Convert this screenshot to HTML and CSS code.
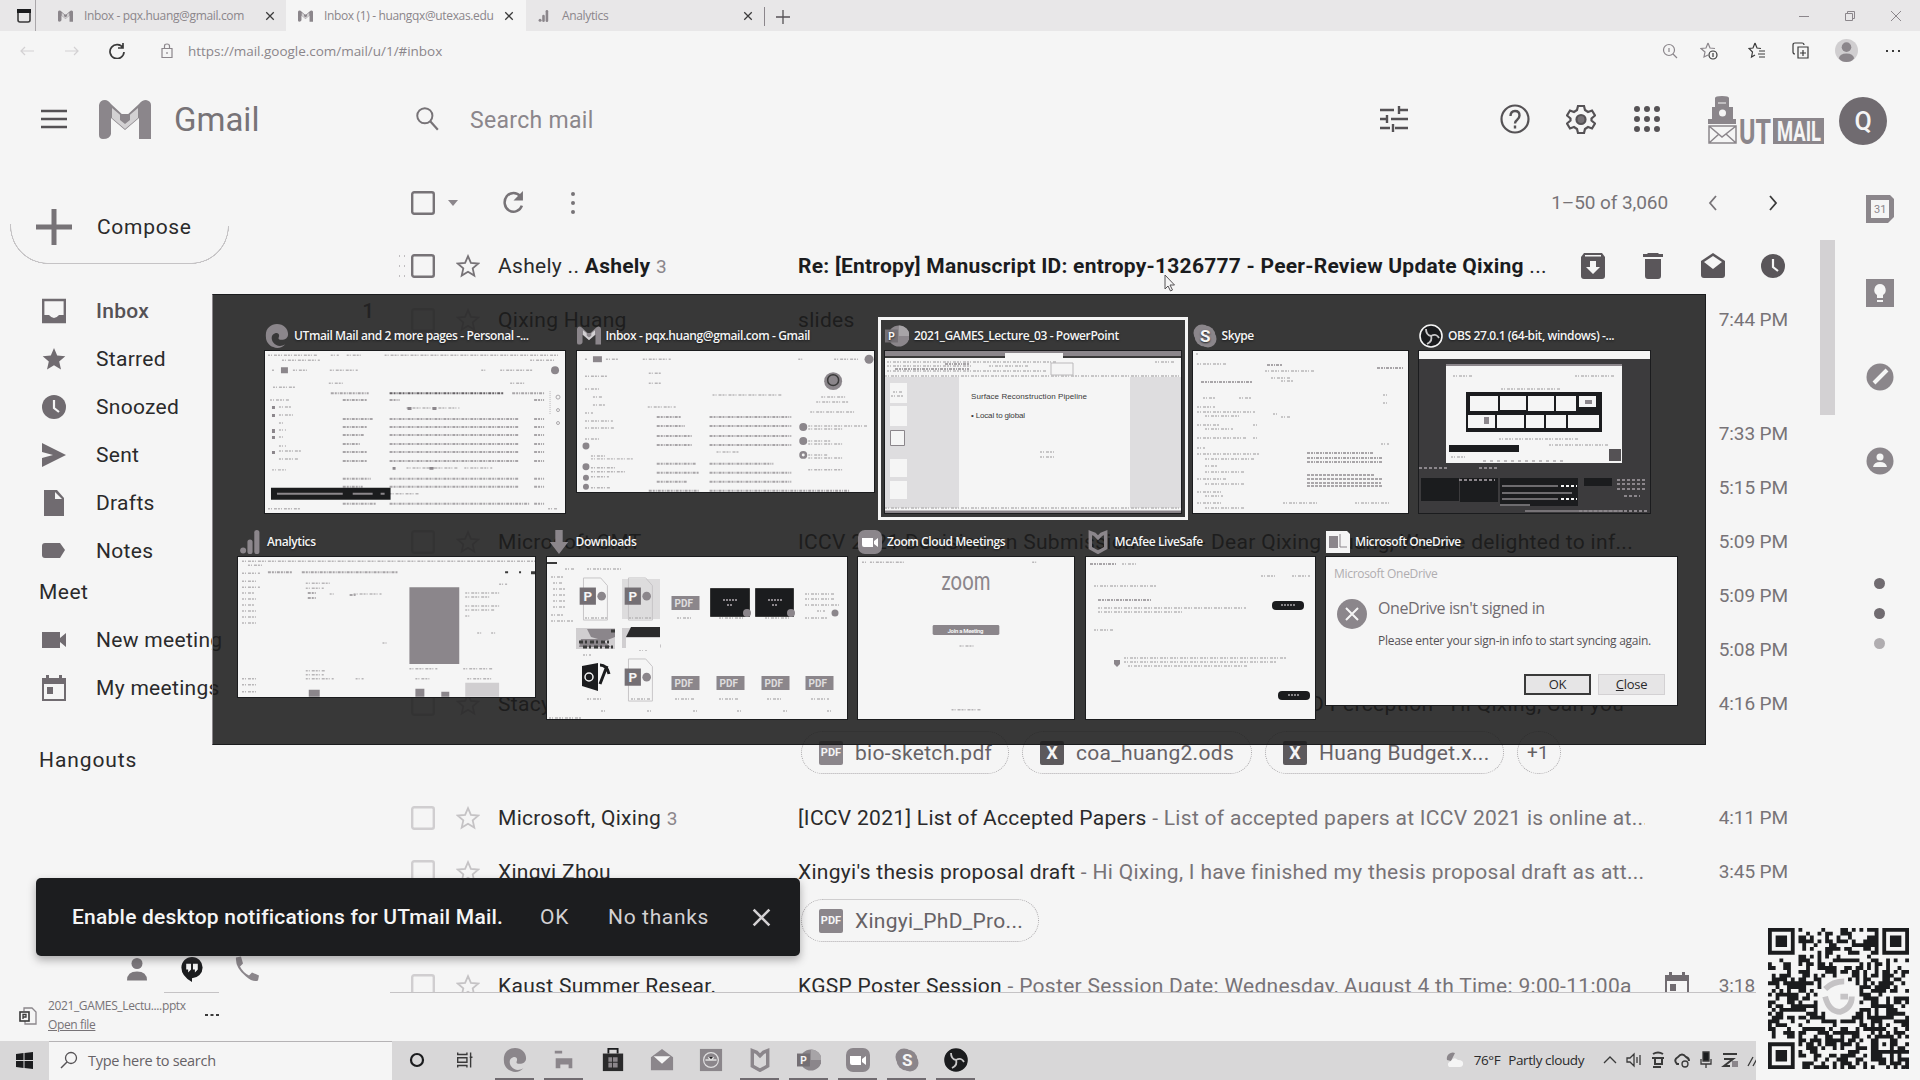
FILE: index.html
```html
<!DOCTYPE html>
<html lang="en">
<head>
<meta charset="utf-8">
<title>Inbox - Gmail</title>
<link rel="stylesheet" href="styles.css">
</head>
<body>
<svg class="defs" width="0" height="0" aria-hidden="true">
  <symbol id="gm" viewBox="0 0 52 39"><path fill="#8b868b" d="M0 5Q1 0 6 0Q9 0 12 4L26 17L40 4Q43 0 47 0Q52 1 52 5V39H40V18L26 30L12 18V34Q11 39 4 39Q0 39 0 35Z"/><path fill="#d3d1d3" d="M13 8L26 19L39 8V18L26 29L13 18Z"/><path fill="#8b868b" d="M21 14h10v6l-5 4l-5-4z"/></symbol>
  <symbol id="box" viewBox="0 0 24 24"><rect x="1.2" y="1.2" width="21.6" height="21.6" rx="2" fill="none" stroke="currentColor" stroke-width="2.4"/></symbol>
  <symbol id="star" viewBox="0 0 24 24"><path fill="none" stroke="currentColor" stroke-width="1.8" d="M12 2.2l2.9 6.7 7.3.7-5.5 4.8 1.6 7.2L12 17.8l-6.300 3.800 1.600-7.200L1.800 9.600l7.300-.7z"/></symbol>
  <symbol id="starf" viewBox="0 0 24 24"><path fill="currentColor" d="M12 1l3.200 7.500 8.100.7-6.100 5.400 1.800 8L12 18.300 5 22.600l1.800-8L.7 9.200l8.100-.7z"/></symbol>
  <symbol id="clock" viewBox="0 0 24 24"><circle cx="12" cy="12" r="12" fill="currentColor"/><path fill="none" stroke="#f5f5f5" stroke-width="2.200" d="M12 5v8l5 4"/></symbol>
  <symbol id="cal" viewBox="0 0 24 26"><path fill="currentColor" d="M4 0h3v3h10V0h3v3h4v6H0V3h4z"/><path fill="none" stroke="currentColor" stroke-width="2" d="M1 8v17h22V8"/><path fill="currentColor" d="M5 12h6v7H5z"/></symbol>
  <symbol id="edge" viewBox="0 0 26 26"><path fill="currentColor" d="M1 14C0 5 6 0 13 0c7 0 12 5 12 11 0 4-3 6-7 6-3 0-4-1-3-3 1-3-1-5-4-4-4 1-5 6-2 10 3 4 8 5 13 2-3 4-9 5-13 3-5-2-8-6-8-11z"/></symbol>
  <symbol id="bars" viewBox="0 0 24 28"><circle cx="4" cy="24" r="3.500" fill="currentColor"/><rect x="9" y="11" width="6" height="17" rx="3" fill="currentColor"/><rect x="17" y="0" width="6" height="28" rx="3" fill="currentColor"/></symbol>
  <symbol id="mcafee" viewBox="0 0 22 28"><path fill="none" stroke="currentColor" stroke-width="4" d="M2 3l5 2 4 4 4-4 5-2v18l-9 5-9-5z"/></symbol>
  <symbol id="ppt" viewBox="0 0 26 26"><circle cx="15" cy="13" r="11.500" fill="#8b868b"/><path fill="#a7a4a7" d="M15 1.500A11.500 11.500 0 0 1 26.500 13H15z"/><rect x="0" y="6" width="14" height="14" fill="#746f74"/><text x="3.500" y="17" class="glyph" font-size="11">P</text></symbol>
  <symbol id="zoomi" viewBox="0 0 24 24"><rect width="24" height="24" rx="7" fill="#8b868b"/><path fill="#fff" d="M4 8h11v9H6q-2 0-2-2zM16 11l4-3v9l-4-3z"/></symbol>
  <symbol id="skype" viewBox="0 0 24 24"><circle cx="9" cy="9" r="8.500" fill="#8b868b"/><circle cx="15" cy="15" r="8.500" fill="#8b868b"/><circle cx="12" cy="12" r="10.500" fill="#8b868b"/><text x="7" y="18" class="glyph" font-size="17">S</text></symbol>
  <symbol id="obs" viewBox="0 0 24 24"><circle cx="12" cy="12" r="11" fill="#1b1c1e" stroke="currentColor" stroke-width="1.600"/><path fill="none" stroke="#c9c8c9" stroke-width="1.800" d="M12 12q-5-1-5-7M12 12q5-3 8 2M12 12q2 5-4 8"/></symbol>
  <symbol id="mag" viewBox="0 0 24 24"><circle cx="10" cy="9" r="7" fill="none" stroke="currentColor" stroke-width="1.800"/><path stroke="currentColor" stroke-width="2" d="M15 14l7 8"/></symbol>
  <symbol id="x" viewBox="0 0 12 12"><path stroke="currentColor" stroke-width="1.500" d="M1.500 1.500l9 9M10.500 1.500l-9 9"/></symbol>
  <symbol id="p-file" viewBox="0 0 30 46"><path fill="none" stroke="#c5c3c5" d="M4 1h18l7 8v36H4z"/><rect y="11" width="17" height="18" fill="#746f74"/><text x="4" y="25" class="glyph" font-size="14">P</text><circle cx="23" cy="20" r="4.500" fill="#8b868b"/></symbol>
  <symbol id="pdf" viewBox="0 0 28 14"><rect width="28" height="14" fill="#8b868b"/><text x="3" y="11" class="glyph" font-size="10" fill-opacity=".8">PDF</text></symbol>
</svg>

<div class="tabs">
  <div class="tab-menu"><svg width="14" height="14" viewBox="0 0 14 14"><path fill="none" stroke="#3a3a3a" stroke-width="1.600" d="M1 2v9q0 2 2 2h8q2 0 2-2V2"/><path fill="#1b1c1e" d="M0 0h14v4H0z"/></svg></div>
  <div class="tab t1"><svg class="fav"><use href="#gm"/></svg><span>Inbox - pqx.huang@gmail.com</span><svg class="close"><use href="#x"/></svg></div>
  <div class="tab t2"><svg class="fav"><use href="#gm"/></svg><span>Inbox (1) - huangqx@utexas.edu</span><svg class="close"><use href="#x"/></svg></div>
  <div class="tab t3"><svg class="fav"><use href="#bars"/></svg><span>Analytics</span><svg class="close"><use href="#x"/></svg></div>
  <div class="newtab"><svg width="14" height="14" viewBox="0 0 14 14"><path stroke="#555255" stroke-width="1.300" d="M7 0v14M0 7h14"/></svg></div>
  <div class="winctl">
    <svg viewBox="0 0 12 12"><path stroke="#8b868b" d="M1 6.500h10"/></svg>
    <svg viewBox="0 0 12 12"><path fill="none" stroke="#8b868b" d="M1.500 3.500h7v7h-7zM3.500 3.500v-2h7v7h-2"/></svg>
    <svg viewBox="0 0 12 12"><path stroke="#8b868b" d="M1 1l10 10M11 1L1 11"/></svg>
  </div>
</div>

<div class="address">
  <svg class="nav faint" viewBox="0 0 16 16"><path d="M15 8H2M6 4L2 8l4 4"/></svg>
  <svg class="nav faint" viewBox="0 0 16 16"><path d="M1 8h13M10 4l4 4-4 4"/></svg>
  <svg class="nav" viewBox="0 0 16 16"><path stroke-width="1.700" d="M14 5A7 7 0 1 0 15 9M14 0v5H9"/></svg>
  <svg class="lock" viewBox="0 0 12 16"><path d="M1 5.500h10v9H1zM3.500 5V3q0-2 2.500-2t2.500 2v2M6 9v2"/></svg>
  <span class="url">https://mail.google.com/mail/u/1/#inbox</span>
  <div class="browser-tools">
    <svg viewBox="0 0 18 18"><circle cx="8" cy="8" r="5.500"/><path d="M12 12l4 4M8 6v4"/></svg>
    <svg class="addfav" viewBox="0 0 18 18"><path d="M8 1l2 5 5 .5M8 1L6 6l-5 .5 4 3.500L4 15l4-2"/><circle cx="13" cy="13" r="4" stroke="#3a3a3a"/><path stroke="#3a3a3a" d="M13 11v4"/></svg>
    <svg class="dk" viewBox="0 0 18 18"><path d="M7 1l2 5 4 .5M7 1L5 6l-4 .5L4.500 10 3.500 15 7 13M11 9h6M10 12h7M11 15h6"/></svg>
    <svg class="dk" viewBox="0 0 18 18"><path d="M3 12q-2 0-2-2V3q0-2 2-2h7q2 0 2 2M6 5h10v11H6zM11 8v6M8 11h6"/></svg>
    <svg class="avatar" viewBox="0 0 24 24"><circle cx="12" cy="12" r="12" fill="#d0ced0"/><circle cx="12" cy="8.500" r="5" fill="#8b868b"/><path fill="#8b868b" d="M4 20q1-5 8-5t8 5q-3 4-8 4t-8-4z"/></svg>
    <svg class="dk" viewBox="0 0 18 18"><path stroke-width="2" d="M2 9h2M8 9h2M14 9h2"/></svg>
  </div>
</div>

<header class="gmail-head">
  <svg class="burger" viewBox="0 0 26 20"><path stroke="#555255" stroke-width="2.600" d="M0 2h26M0 10h26M0 18h26"/></svg>
  <svg class="logo"><use href="#gm"/></svg>
  <span class="brand">Gmail</span>
  <svg class="search-icon"><use href="#mag"/></svg>
  <span class="search-text">Search mail</span>
  <div class="head-icons">
    <svg viewBox="0 0 30 30"><path d="M1 6h14M20 6h9M1 15h6M12 15h17M1 24h10M16 24h13M20 2v8M8 11v8M14 20v8" stroke-width="2.400"/></svg>
    <svg viewBox="0 0 30 30"><circle cx="15" cy="15" r="13.500"/><path stroke-width="2.400" d="M10.500 12q0-5 4.500-5t4.500 4.500Q19.500 14 17 16q-2 1.500-2 3.500M15 21.500v3"/></svg>
    <svg viewBox="0 0 30 30"><path d="M12 2h6l1 4 3 2 4-1.500 3 5-3.500 3v2l3.500 3-3 5-4-1.500-3 2-1 4h-6l-1-4-3-2-4 1.500-3-5 3.500-3v-2l-3.500-3 3-5L8 8l3-2z"/><circle cx="15" cy="15.500" r="4.500" fill="#777377"/></svg>
    <svg viewBox="0 0 30 30"><path stroke-width="6" stroke-linecap="round" d="M5 5h0M15 5h0M25 5h0M5 15h0M15 15h0M25 15h0M5 25h0M15 25h0M25 25h0"/></svg>
  </div>
  <svg class="utmail" viewBox="0 0 116 48"><g fill="#8b868b"><path d="M7 2q0-2 7-2t7 2v9h4v12h3v5H0v-5h4V11h3z"/><path d="M65 22h51v26H65z"/></g><circle cx="14.500" cy="17" r="3.500" fill="#f5f5f5"/><path fill="none" stroke="#f5f5f5" d="M10 7h8"/><path fill="none" stroke="#8b868b" stroke-width="1.500" d="M1 30h27v17H1zM1 30l13 11 14-11M1 47l10-9M28 47l-10-9"/><text x="31" y="48" class="ut" textLength="32" lengthAdjust="spacingAndGlyphs" font-size="35">UT</text><text x="69" y="45" class="glyph" textLength="44" lengthAdjust="spacingAndGlyphs" font-size="27">MAIL</text></svg>
  <div class="account">Q</div>
</header>

<main class="app">
  <nav class="side">
    <div class="compose"><svg viewBox="0 0 36 36"><path stroke="#777377" stroke-width="5" d="M18 0v36M0 18h36"/></svg>Compose</div>
    <div class="folders">
      <a class="cur"><svg viewBox="0 0 24 26"><path fill="none" stroke="currentColor" stroke-width="2.400" d="M1.200 2h21.600v22H1.200z"/><path fill="currentColor" d="M1 17h6q5 6 10 0h6v8H1z"/></svg>Inbox<i>1</i></a>
      <a><svg><use href="#starf"/></svg>Starred</a>
      <a><svg><use href="#clock"/></svg>Snoozed</a>
      <a><svg viewBox="0 0 24 24"><path fill="currentColor" d="M0 0l24 12L0 24v-9l11-3L0 9z"/></svg>Sent</a>
      <a><svg viewBox="0 0 24 26"><path fill="currentColor" d="M2 0h13l7 8v18H2z"/><path fill="#f5f5f5" d="M13 2v7h7z"/></svg>Drafts</a>
      <a><svg viewBox="0 0 24 26"><path fill="currentColor" d="M3 5h15l5 7-5 8H3q-3 0-3-3V8q0-3 3-3z"/></svg>Notes</a>
    </div>
    <h2>Meet</h2>
    <div class="meet">
      <a><svg viewBox="0 0 24 24"><path fill="currentColor" d="M0 4h18v6l6-5v14l-6-5v6H0z"/></svg>New meeting</a>
      <a><svg><use href="#cal"/></svg>My meetings</a>
    </div>
    <h2 class="hang">Hangouts</h2>
    <div class="chat-tabs">
      <span><svg viewBox="0 0 24 26"><circle cx="12" cy="7" r="5.500" fill="#7d797d"/><path fill="#7d797d" d="M2 24q0-9 10-9t10 9z"/></svg></span>
      <span class="on"><svg viewBox="0 0 24 28"><path fill="#1b1c1e" d="M12 1a11 11 0 0 1 0 22v4Q1 21 1 12A11 11 0 0 1 12 1z"/><path fill="#f5f5f5" d="M6 8h5v6l-3 3v-3H6zM13 8h5v6l-3 3v-3h-2z"/></svg></span>
      <span><svg viewBox="0 0 24 26"><path fill="#8b868b" d="M1 1l5-1 2 7-3 3q3 6 9 9l3-3 7 3-1 5q-5 2-12-4Q0 11 1 1z"/></svg></span>
    </div>
  </nav>

  <section class="mail">
    <div class="toolbar">
      <svg class="chk"><use href="#box"/></svg>
      <svg class="caret" viewBox="0 0 10 6"><path fill="#8b868b" d="M0 0h10L5 6z"/></svg>
      <svg class="refresh" viewBox="0 0 20 22"><path fill="none" stroke="#777377" stroke-width="2.400" d="M16.500 5A8.500 9 0 1 0 18 14"/><path fill="#777377" d="M19 0v9h-9z"/></svg>
      <svg class="more" viewBox="0 0 6 24"><path stroke="#777377" stroke-width="4" stroke-linecap="round" d="M3 3h0M3 12h0M3 21h0"/></svg>
      <span class="count">1–50 of 3,060</span>
      <svg class="pg" viewBox="0 0 10 16"><path d="M8 1L2 8l6 7"/></svg>
      <svg class="pg dark" viewBox="0 0 10 16"><path d="M2 1l6 7-6 7"/></svg>
    </div>
    <div class="rows">
      <div class="row hover"><svg class="grip" viewBox="0 0 8 22"><path d="M1 1h1M6 1h1M1 11h1M6 11h1M1 21h1M6 21h1"/></svg><svg class="chk"><use href="#box"/></svg><svg class="st"><use href="#star"/></svg><div class="from">Ashely .. <b>Ashely</b> <small>3</small></div><div class="subj"><p><b>Re: [Entropy] Manuscript ID: entropy-1326777 - Peer-Review Update Qixing</b> ...</p></div>
        <div class="acts">
          <svg viewBox="0 0 24 26"><path fill="currentColor" d="M3 0h18l3 4v19q0 3-3 3H3q-3 0-3-3V4z"/><path fill="#f5f5f5" d="M4 2h16v1.500H4zM9 8h6v6h4l-7 7-7-7h4z"/></svg>
          <svg viewBox="0 0 24 26"><path fill="currentColor" d="M7 0h10l1 1h4v3H2V1h4zM4 6h16v17q0 3-3 3H7q-3 0-3-3z"/></svg>
          <svg viewBox="0 0 24 26"><path fill="currentColor" d="M12 0l12 8v14q0 3-3 3H3q-3 0-3-3V8z"/><path fill="#f5f5f5" d="M12 3l9 6-9 7-9-7z"/></svg>
          <svg viewBox="0 0 24 24"><use href="#clock"/></svg>
        </div></div>
      <div class="row att"><svg class="chk"><use href="#box"/></svg><svg class="st"><use href="#star"/></svg><div class="from">Qixing Huang</div><div class="subj"><p>slides</p></div><time>7:44 PM</time></div>
      <div class="row"><svg class="chk"><use href="#box"/></svg><svg class="st"><use href="#star"/></svg><div class="from"></div><div class="subj"></div><time>7:33 PM</time></div>
      <div class="row"><svg class="chk"><use href="#box"/></svg><svg class="st"><use href="#star"/></svg><div class="from"></div><div class="subj"></div><time>5:15 PM</time></div>
      <div class="row"><svg class="chk"><use href="#box"/></svg><svg class="st"><use href="#star"/></svg><div class="from">Microsoft CMT</div><div class="subj"><p>ICCV 2021 Decision on Submission <span class="rest">- Dear Qixing Huang, We are delighted to inf...</span></p></div><time>5:09 PM</time></div>
      <div class="row"><svg class="chk"><use href="#box"/></svg><svg class="st"><use href="#star"/></svg><div class="from"></div><div class="subj"></div><time>5:09 PM</time></div>
      <div class="row"><svg class="chk"><use href="#box"/></svg><svg class="st"><use href="#star"/></svg><div class="from"></div><div class="subj"></div><time>5:08 PM</time></div>
      <div class="row att"><svg class="chk"><use href="#box"/></svg><svg class="st"><use href="#star"/></svg><div class="from">Stacy</div><div class="subj"><p class="end">3D Perception - Hi Qixing, Can you</p>
        <div class="chips"><span class="chip c1"><em>PDF</em>bio-sketch.pdf</span><span class="chip c2"><em class="xl">X</em>coa_huang2.ods</span><span class="chip c3"><em class="xl">X</em>Huang Budget.x...</span><span class="chip c4">+1</span></div></div><time>4:16 PM</time></div>
      <div class="row"><svg class="chk"><use href="#box"/></svg><svg class="st"><use href="#star"/></svg><div class="from">Microsoft, Qixing <small>3</small></div><div class="subj"><p>[ICCV 2021] List of Accepted Papers <s>- List of accepted papers at ICCV 2021 is online at...</s></p></div><time>4:11 PM</time></div>
      <div class="row att"><svg class="chk"><use href="#box"/></svg><svg class="st"><use href="#star"/></svg><div class="from">Xingyi Zhou</div><div class="subj"><p>Xingyi's thesis proposal draft <s>- Hi Qixing, I have finished my thesis proposal draft as att...</s></p>
        <div class="chips"><span class="chip c5"><em>PDF</em>Xingyi_PhD_Pro...</span></div></div><time>3:45 PM</time></div>
      <div class="row"><svg class="chk"><use href="#box"/></svg><svg class="st"><use href="#star"/></svg><div class="from">Kaust Summer Resear.</div><div class="subj"><p>KGSP Poster Session <s>- Poster Session Date: Wednesday, August 4 th Time: 9:00-11:00a</s></p></div><svg class="rowcal"><use href="#cal"/></svg><time>3:18 PM</time></div>
    </div>
  </section>

  <div class="scroll"><div class="thumb"></div></div>

  <aside class="panel">
    <svg viewBox="0 0 28 28"><path fill="#8b868b" d="M0 0h24l4 4v18l-6 6H0z"/><path fill="#f5f5f5" d="M5 5h18v18H5z"/><text x="8" y="18" font-size="11" fill="#8b868b" class="plain">31</text></svg>
    <svg viewBox="0 0 28 28"><path fill="#8b868b" d="M0 0h28v28H0z"/><path fill="#f5f5f5" d="M14 5a6 6 0 0 1 3 11v3h-6v-3A6 6 0 0 1 14 5zM11 21h6v2h-6z"/></svg>
    <svg viewBox="0 0 28 28"><circle cx="14" cy="14" r="13.500" fill="#8b868b"/><path stroke="#f5f5f5" stroke-width="4" d="M8 20L21 7"/></svg>
    <svg viewBox="0 0 28 28"><circle cx="14" cy="14" r="13.500" fill="#8b868b"/><circle cx="14" cy="10" r="3.500" fill="#f5f5f5"/><path fill="#f5f5f5" d="M7 20q1-5 7-5t7 5z"/></svg>
    <div class="dots"><i></i><i></i><i class="lt"></i></div>
  </aside>
</main>

<div class="download">
  <svg viewBox="0 0 18 18"><path fill="none" stroke="#8b868b" stroke-width="1.300" d="M5 4V1h8l4 4v12H6v-3"/><rect x="1" y="5" width="9" height="9" fill="none" stroke="#3a3a3a" stroke-width="1.600"/><path fill="none" stroke="#3a3a3a" stroke-width="1.300" d="M4 12V7.500h3v2.500H4"/></svg>
  <div><div>2021_GAMES_Lectu....pptx</div><div><u>Open file</u></div></div>
  <svg class="ddots" viewBox="0 0 14 4"><path stroke="#3a3a3a" stroke-width="2" d="M0 2h3M5.500 2h3M11 2h3"/></svg>
</div>

<footer class="taskbar">
  <div class="start"><svg viewBox="0 0 17 17"><path fill="#1b1c1e" d="M0 2l7.500-1v7H0zM8.500 1L17 0v8H8.500zM0 9h7.500v7L0 15zM8.500 9H17v8l-8.500-1z"/></svg></div>
  <div class="tsearch"><svg viewBox="0 0 18 18"><circle cx="11" cy="7" r="5.500" fill="none" stroke="#555255" stroke-width="1.300"/><path stroke="#555255" stroke-width="1.500" d="M7 11l-6 6"/></svg>Type here to search</div>
  <div class="apps">
    <span><svg viewBox="0 0 26 26"><circle cx="13" cy="13" r="6.500" fill="none" stroke="#1b1c1e" stroke-width="2.400"/></svg></span>
    <span><svg viewBox="0 0 26 26"><path fill="none" stroke="#3a3a3a" stroke-width="1.500" d="M4 5v2h10V5M4 10.500h10v5H4zM4 21v-2h10v2M18 5v16M17 10h3"/></svg></span>
    <span class="open"><svg><use href="#edge"/></svg></span>
    <span class="open"><svg viewBox="0 0 26 26"><path fill="#8b868b" d="M3 3h8v3H3zM4 11h18v11h-4v-4H9v4H4z"/></svg></span>
    <span><svg viewBox="0 0 26 26"><path fill="none" stroke="#1b1c1e" stroke-width="2" d="M8 6V1h10v5"/><path fill="#2a2a2b" d="M2 6h22v19H2z"/><path fill="#8b868b" d="M8 10h4v5H8zM13 10h5v5h-5zM8 16h4v5H8zM13 16h5v5h-5z"/></svg></span>
    <span><svg viewBox="0 0 26 26"><path fill="#8b868b" d="M1 10L13 1l12 9v14H1z"/><path fill="#f5f5f5" d="M4 9h18l-9 8z"/></svg></span>
    <span><svg viewBox="0 0 26 26"><path fill="#8b868b" d="M1 1h24v24H1z"/><circle cx="13" cy="13" r="8" fill="none" stroke="#e0dfe0" stroke-width="1.300"/><path stroke="#e0dfe0" stroke-width="1.500" d="M7 13h12M10 10l3 3 3-3"/></svg></span>
    <span class="open"><svg><use href="#mcafee"/></svg></span>
    <span class="open"><svg><use href="#ppt"/></svg></span>
    <span class="open"><svg><use href="#zoomi"/></svg></span>
    <span class="open"><svg><use href="#skype"/></svg></span>
    <span class="open"><svg class="obs-task"><use href="#obs"/></svg></span>
  </div>
  <div class="tray">
    <svg viewBox="0 0 18 18"><path fill="#8b868b" d="M1 9a6 6 0 0 1 8-7L5 10z"/><path fill="#f5f5f5" d="M3 16q-3-4 2-6 3-5 7-1 6 0 5 5-1 2-3 2z"/></svg>
    <span class="temp">76°F</span><span class="cond">Partly cloudy</span>
    <svg viewBox="0 0 18 18"><path d="M3 12l6-6 6 6"/></svg>
    <svg viewBox="0 0 18 18"><path d="M2 7h3l4-4v12l-4-4H2zM12 6v6M15 4v10"/></svg>
    <svg viewBox="0 0 18 18"><path stroke-width="2" d="M4 3q5-3 10 0M3 7h12M4 16h8M6 7v6h7V7"/></svg>
    <svg viewBox="0 0 18 18"><path stroke-width="2" d="M6 13H4q-4-4 1-7 4-5 8 0 3 1 3 4"/><circle cx="12" cy="13" r="3"/></svg>
    <svg viewBox="0 0 18 18"><path fill="#1b1c1e" d="M6 1h6v9H6z"/><path d="M4 8v5h10V8M9 13v4"/></svg>
    <svg viewBox="0 0 18 18"><path stroke-width="2" d="M2 3h14M3 8h9L3 15h6"/><path fill="#8b868b" stroke="none" d="M11 10h6v6h-6z"/></svg>
    <svg viewBox="0 0 18 18"><path d="M3 15l5-9M8 15l5-9"/></svg>
  </div>
</footer>

<div class="toast"><span class="msg">Enable desktop notifications for UTmail Mail.</span><span class="ok">OK</span><span class="no">No thanks</span><svg><use href="#x"/></svg></div>

<div class="switcher">
  <div class="line first">
    <div class="card w301"><h3><svg><use href="#edge"/></svg><span>UTmail Mail and 2 more pages - Personal -...</span></h3>
      <svg class="shot" height="162" viewBox="0 0 301 162"><g class="s"><path d="M3 4h50M66 4h8M82 4h16M120 4h174M17 9h38M266 9h26M7 19h3M28 19h14M65 19h28M217 19h4M236 19h32M8 36h22M64 32h16M246 32h16M5 49h20M14 56h12M14 64h14M14 72h6M14 79h7M14 86h6M14 95h7M14 100h22M14 108h20M7 119h14M142 57h28M168 57h27M142 117h28M164 117h30M200 117h28M125 143h30M3 158h32M284 158h10"/></g>
        <g class="t"><path d="M66 42h38M78 49h24M125 49h10M78 68h30M125 68h130M78 76h24M125 76h130M78 84h22M125 84h130M78 93h18M125 93h130M78 101h24M125 101h130M78 110h24M125 110h130M78 128h28M125 128h130M78 136h20M125 136h130M78 153h34M125 153h140M270 49h10M270 68h10M270 76h10M270 84h10M270 93h10M270 101h10M270 110h10M270 128h10M270 136h10M270 153h10M248 42h32"/></g><path class="t bolder" d="M125 42h115"/>
        <path class="f" d="M16 16h7v6h-7zM7 55h3v3H7zM7 63h3v3H7zM7 78h3v4H7zM7 85h3v3H7zM7 100h3v3H7zM143 56h4v3h-4zM168 56h4v3h-4zM128 116h3v3h-3zM165 116h4v3h-4z"/><circle class="f" cx="291" cy="19" r="4"/><path stroke="#bbb9bb" stroke-dasharray="1 1" d="M286 40v24"/><g fill="none" stroke="#aaa7aa"><circle cx="294" cy="46" r="2"/><circle cx="294" cy="59" r="1.500"/><circle cx="294" cy="72" r="1.500"/></g>
        <path fill="#1b1c1e" d="M6 137h120v12H6z"/><path stroke="#8b868b" stroke-width="2" d="M12 143h66M88 143h20M116 143h4"/></svg></div>
    <div class="card w298"><h3><svg class="gmini"><use href="#gm"/></svg><span>Inbox - pqx.huang@gmail.com - Gmail</span></h3>
      <svg class="shot" height="141" viewBox="0 0 298 141"><g class="s"><path d="M8 8h3M29 8h12M66 8h28M222 8h4M258 8h24M8 25h22M8 38h16M16 46h10M16 54h12M8 62h8M8 70h28M8 77h30M72 22h12M72 32h12M136 44h70M71 56h28M245 46h24M240 51h32M234 61h44M8 88h14M14 105h14M14 108h42M14 117h26M14 121h36M14 126h18M14 137h20M232 75h60M232 78h34M232 90h22M232 93h36M232 104h20M232 107h36M232 119h34M140 101h22"/></g>
        <g class="t"><path d="M80 66h24M133 66h82M80 75h28M133 75h82M80 85h36M133 85h82M80 94h36M133 94h82M80 113h40M133 113h64M80 122h42M133 122h82M80 131h30M133 131h82M72 140h50M133 140h140"/></g>
        <path class="f" d="M16 5h9v6h-9z"/><g class="f"><circle cx="293" cy="8" r="4.500"/><circle cx="257" cy="30" r="9"/><circle cx="9" cy="95" r="3.500"/><circle cx="9" cy="116" r="3.500"/><circle cx="9" cy="127" r="3"/><circle cx="9" cy="136" r="3"/><circle cx="227" cy="76" r="4"/><circle cx="227" cy="90" r="4"/><circle cx="227" cy="104" r="4"/></g><circle cx="257" cy="29" r="5.500" fill="none" stroke="#3a3a3a" stroke-width="1.500"/><circle cx="227" cy="104" r="1.500" fill="#f5f5f5"/></svg></div>
    <div class="card w296 sel"><h3><svg><use href="#ppt"/></svg><span>2021_GAMES_Lecture_03 - PowerPoint</span></h3>
      <svg class="shot" height="162" viewBox="0 0 296 162"><path fill="#8b868b" d="M0 0h296v5H0z"/><path fill="#3a3a3a" d="M0 5h120v2H0zM178 5h118v2H178z"/><path fill="#f5f5f5" d="M120 2h58v5h-58z"/><path fill="#dedddf" d="M0 26h74v131H0zM245 26h51v131h-51z"/><path fill="#f5f5f5" d="M5 32h17v20H5zM5 55h17v20H5zM5 108h17v18H5zM5 130h17v18H5z"/><path fill="#f5f5f5" stroke="#8b868b" d="M5.500 79.500h14v15h-14z"/><g class="s"><path d="M2 11h170M2 15h84M2 20h160M104 15h40M0 25h296M270 11h20M155 101h14M155 106h14M0 157h296M8 41h10M6 45h12"/></g><path class="t" d="M10 18h74M60 13h24"/><path fill="none" stroke="#bbb9bb" d="M166 12h22v12h-22z"/><path stroke="#8b868b" stroke-width="3" d="M0 161h296"/><g class="slide"><text x="86" y="48" textLength="116">Surface Reconstruction Pipeline</text><text x="86" y="67" textLength="54">• Local to global</text></g></svg></div>
    <div class="card w215"><h3><svg><use href="#skype"/></svg><span>Skype</span></h3>
      <svg class="shot" height="162" viewBox="0 0 215 162"><g class="s"><path d="M3 3h3M4 13h30M72 20h50M78 27h20M88 30h12M10 47h12M46 47h12M4 56h18M4 61h58M12 65h34M4 74h22M60 74h6M12 78h28M4 87h50M60 87h6M4 97h8M80 63h4M88 66h10M190 44h6M190 52h6M188 93h8M4 103h62M12 108h50M12 115h12M12 121h40M4 128h30M12 133h40M4 141h24M12 145h18M4 152h26M12 157h40M90 152h34M162 152h34"/></g><g class="t"><path d="M74 14h16M184 17h26M8 31h52M114 102h66M114 107h76M114 111h76"/></g><path stroke="#aaa7aa" stroke-width="2" stroke-dasharray="3 1" d="M114 124h67M114 128h76M114 132h74M114 135h76"/></svg></div>
    <div class="card w231"><h3><svg class="light"><use href="#obs"/></svg><span>OBS 27.0.1 (64-bit, windows) -...</span></h3>
      <svg class="shot clear" height="162" viewBox="0 0 231 162"><path fill="#3c3b3d" d="M0 0h231v162H0z"/><path fill="#f5f5f5" d="M0 0h231v8H0zM27 13h176v99H27z"/><path stroke="#8b868b" stroke-width="2" d="M27 14h176"/><g class="s"><path d="M34 25h20M156 25h40M82 38h60M80 88h80M32 106h16M130 94h60"/></g><path fill="#1b1c1e" d="M47 41h136v40H47zM30 94h70v7H30z"/><path fill="#f5f5f5" d="M51 45h28v15H51zM81 45h26v14H81zM109 45h26v15h-26zM137 45h20v15h-20zM160 45h17v11h-17zM49 64h27v13H49zM78 64h27v13H78zM107 64h18v13h-18zM127 64h20v13h-20zM149 64h31v13h-31z"/><path fill="#8b868b" d="M65 66h5v7h-5zM166 49h7v4h-7z"/><path fill="#555255" d="M190 98h12v12h-12z"/><path stroke="#8b868b" stroke-dasharray="3 4" d="M64 110h80"/><path fill="#1b1c1e" d="M2 127h38v23H2zM41 127h38v24H41zM81 127h78v28H81zM165 127h28v8h-28z"/><path stroke="#8b868b" stroke-width="1.500" d="M83 135h56M83 142h70M83 148h56M81 154h30M106 160h98"/><path stroke="#8b868b" stroke-width="2" stroke-dasharray="3 2" d="M198 129h30M198 133h30M198 138h30M205 145h16M40 129h36M0 117h30M60 117h18M160 160h70"/><path stroke="#f5f5f5" stroke-width="2" stroke-dasharray="3 2" d="M142 135h16M142 148h16"/></svg></div>
  </div>
  <div class="line second">
    <div class="card w298"><h3><svg><use href="#bars"/></svg><span>Analytics</span></h3>
      <svg class="shot" height="140" viewBox="0 0 298 140"><g class="s"><path d="M4 4h294M10 8h14M4 16h18M4 24h14M4 30h18M4 36h12M4 42h14M4 48h12M4 54h14M4 60h14M4 66h16M68 26h26M68 31h18M92 37h6M116 37h28M262 27h8M228 36h34M228 40h24M228 49h34M228 53h30M228 59h6M240 76h6M254 76h4M145 86h4M68 114h20M68 118h18M4 122h14M68 122h28M118 122h8M4 128h14M4 135h14M172 112h28M226 112h30M178 122h16M230 122h26"/></g><g class="t"><path d="M30 15h24M64 15h96M70 36h8M70 41h8M112 38h6"/></g><path class="f" d="M172 30h50v77h-50zM71 133h11v7H71zM178 132h9v8h-9zM204 135h8v5h-8z"/><path fill="#d0ced0" d="M228 126h34v14h-34z"/><path fill="#3a3a3a" d="M268 14h3v2h-3zM282 14h2v2h-2zM294 14h4v3h-4z"/></svg></div>
    <div class="card w300"><h3><svg class="dn" viewBox="0 0 20 26"><path fill="#8b868b" d="M6 0h8v13h6L10 26 0 13h6z"/></svg><span>Downloads</span></h3>
      <svg class="shot" height="162" viewBox="0 0 300 162"><path fill="#dddcdd" d="M75 22h38v40H75z"/><path stroke="#3a3a3a" stroke-width="2" d="M0 6h10"/><g class="s"><path d="M18 12h10M40 12h34M4 20h12M6 26h10M6 32h12M6 38h12M6 44h12M6 50h12M4 58h12M4 64h22M38 61h22M82 61h22M130 61h16M172 61h24M218 61h24M258 61h22M40 142h16M84 142h20M128 142h20M172 142h20M220 142h16M264 142h18M54 154h6M100 154h5M146 154h5M190 154h6M236 154h4M280 154h4M2 161h32M36 98h8M92 93h8M258 37h30M258 42h30M258 48h34M270 54h8"/></g><use href="#p-file" x="32" y="20" width="30" height="44"/><use href="#p-file" x="77" y="20" width="30" height="44"/><use href="#pdf" x="124" y="39" width="29" height="14"/><path fill="#1b1c1e" stroke="#3a3a3a" d="M163.500 31.500h39v28h-39zM208.500 31.500h38v28h-38z"/><path stroke="#8b868b" stroke-dasharray="2 1" stroke-width="2" d="M176 43h14M180 48h6M221 43h14M225 48h6"/><g class="f"><circle cx="200" cy="56" r="4"/><circle cx="244" cy="56" r="4"/><circle cx="288" cy="56" r="3.500"/><circle cx="110" cy="89" r="3.500"/></g><path fill="#d0ced0" d="M29 71h39v21H29zM75 71h38v20H75z"/><path class="f" d="M40 72h28v8l-10 4-14-4zM34 82h20l10 8H32z"/><path stroke="#3a3a3a" stroke-width="3" stroke-dasharray="4 2 2 3" d="M32 85h30M36 90h30M64 74h4"/><path fill="#f5f5f5" d="M79 81h34v12H79z"/><path fill="#2a2a2b" d="M84 70h29v10H79z"/><path fill="#1b1c1e" d="M35 109l16-3v28l-16-5z"/><circle cx="42" cy="120" r="4" fill="none" stroke="#f5f5f5" stroke-width="1.500"/><path stroke="#1b1c1e" stroke-width="3" fill="none" d="M53 127l7-18M53 108q7 0 9 9"/><use href="#p-file" x="77" y="101" width="30" height="44"/><use href="#pdf" x="124" y="119" width="29" height="14"/><use href="#pdf" x="169" y="119" width="29" height="14"/><use href="#pdf" x="214" y="119" width="29" height="14"/><use href="#pdf" x="258" y="119" width="29" height="14"/></svg></div>
    <div class="card w217"><h3><svg><use href="#zoomi"/></svg><span>Zoom Cloud Meetings</span></h3>
      <svg class="shot" height="162" viewBox="0 0 217 162"><g class="s"><path d="M4 5h6M12 5h36M175 5h4M102 89h14M94 153h30"/></g><text x="84" y="33" class="zoomword" textLength="49" lengthAdjust="spacingAndGlyphs">zoom</text><rect class="f" x="75" y="68" width="67" height="10" rx="1.500"/><text x="90" y="75.500" class="glyph" font-size="6" textLength="36">Join a Meeting</text></svg></div>
    <div class="card w229"><h3><svg class="mc"><use href="#mcafee"/></svg><span>McAfee LiveSafe</span></h3>
      <svg class="shot" height="162" viewBox="0 0 229 162"><g class="s"><path d="M36 7h14M175 19h16M206 19h18M8 29h62M8 73h20M12 51h148M12 55h86M38 101h162M38 105h152M42 109h120"/></g><g class="t"><path d="M4 7h26M12 43h54"/></g><path class="f" d="M28 103h6v4l-3 3-3-3z"/><rect x="186" y="44" width="32" height="9" rx="4" fill="#1b1c1e"/><rect x="192" y="134" width="32" height="9" rx="4" fill="#1b1c1e"/><path stroke="#aaa7aa" stroke-dasharray="2 1" stroke-width="1.500" d="M195 48h14M202 138h12"/></svg></div>
    <div class="card w351"><h3><svg viewBox="0 0 24 24"><path fill="#f5f5f5" d="M0 1h21l3 3v19H0z"/><path fill="#8b868b" d="M3 6h9v12H3z"/><path fill="none" stroke="#8b868b" d="M14 4v13h7"/></svg><span>Microsoft OneDrive</span></h3>
      <div class="dialog"><div class="dt">Microsoft OneDrive</div><div class="db"><svg viewBox="0 0 30 30"><circle cx="15" cy="15" r="15" fill="#8b868b"/><path stroke="#f5f5f5" stroke-width="2" d="M9 9l12 12M21 9L9 21"/></svg><div><h4>OneDrive isn't signed in</h4><p>Please enter your sign-in info to start syncing again.</p></div></div><div class="btns"><span class="b1">OK</span><span><u>C</u>lose</span></div></div></div>
  </div>
</div>

<svg class="cursor" viewBox="0 0 12 18"><path fill="#f5f5f5" stroke="#555255" d="M1 1v14l3-3 2.500 5 2-1-2.500-5h4.500z"/></svg>

<div class="qr"><svg id="qr" viewBox="0 0 37 37"></svg></div>
<script src="qr.js"></script>
</body>
</html>
```
FILE: styles.css
```css
* { box-sizing: border-box; }
html, body { margin: 0; }
body { width: 1920px; height: 1080px; overflow: hidden; position: relative; display: flex; flex-direction: column; background: #f5f5f5; color: #2a2a2b; font-family: Roboto, "Liberation Sans", sans-serif; font-size: 21px; }
svg { display: block; flex: none; }
h2, h3, h4, p { margin: 0; font-weight: 400; }
.defs { position: absolute; }
.glyph { fill: #f5f5f5; font-family: Roboto, sans-serif; font-weight: 700; }
.plain { font-family: Roboto, sans-serif; }
.ut { fill: #8b868b; font-family: Roboto, sans-serif; font-weight: 700; }

.tabs { height: 31px; flex: none; display: flex; background: #e8e7e8; font: 12px "Open Sans", sans-serif; letter-spacing: -.35px; color: #8b868b; }
.tab-menu { width: 36px; display: flex; align-items: center; padding-left: 17px; border-right: 1px solid #aaa7aa; }
.tab { display: flex; align-items: center; }
.tab span { flex: 1; white-space: nowrap; overflow: hidden; padding-left: 11px; }
.tab .fav { width: 15px; height: 12px; color: #8b868b; }
.tab .close { width: 10px; height: 10px; color: #3a3a3a; margin-left: 8px; }
.t1 { width: 250px; padding: 0 11px 0 22px; }
.t2 { width: 240px; background: #f5f5f5; padding: 0 12px 0 12px; }
.t3 { width: 238px; padding: 0 11px 0 10px; }
.newtab { border-left: 1px solid #8b868b; margin: 7px 0 5px; padding-left: 11px; display: flex; align-items: center; }
.winctl { margin-left: auto; display: flex; gap: 34px; align-items: center; padding-right: 18px; }
.winctl svg { width: 12px; height: 12px; }

.address { height: 41px; flex: none; display: flex; align-items: center; padding: 0 0 2px 19px; }
.address svg { fill: none; stroke: #3a3a3a; stroke-width: 1.200; }
.nav { width: 16px; height: 16px; margin-right: 29px; }
.address .faint { stroke: #d3d1d3; }
.address .lock { width: 12px; height: 16px; stroke: #8b868b; margin: 0 15px 0 7px; }
.url { font: 13.500px "Open Sans", sans-serif; color: #8b868b; letter-spacing: -.03px; }
.browser-tools { margin-left: auto; display: flex; width: 241px; justify-content: space-between; align-items: center; margin-right: 18px; }
.browser-tools svg { width: 18px; height: 18px; stroke: #8b868b; }
.browser-tools .addfav { margin: 0 5px 0 -5px; }
.browser-tools .dk { stroke: #3a3a3a; }
.browser-tools .avatar { width: 23px; height: 23px; stroke: none; }

.gmail-head { height: 94px; flex: none; display: flex; align-items: center; padding-left: 41px; }
.burger { width: 26px; height: 20px; }
.logo { width: 52px; height: 39px; margin: 0 0 0 32px; }
.brand { width: 240px; margin-left: 23px; font-size: 33px; color: #777377; }
.search-icon { width: 26px; height: 26px; color: #777377; }
.search-text { margin-left: 30px; font-size: 23px; color: #8b868b; margin-top: 3px; letter-spacing: .3px; }
.head-icons { display: flex; margin-left: auto; align-items: center; }
.head-icons svg { width: 30px; height: 30px; fill: none; stroke: #555255; stroke-width: 2.200; margin-right: 36px; }
.head-icons svg:first-child { margin-right: 91px; }
.utmail { width: 116px; height: 48px; margin: 2px 0 0 10px; }
.account { width: 48px; height: 48px; border-radius: 50%; background: #706b70; color: #f5f5f5; display: flex; align-items: center; justify-content: center; font-size: 25px; font-weight: 500; margin: 4px 33px 0 15px; }

.app { height: 827px; flex: none; display: flex; }
.side { width: 390px; display: flex; flex-direction: column; white-space: nowrap; }
.compose { width: 219px; height: 74px; margin: 24px 0 0 10px; padding: 0 0 0 25px; border: 1px solid #b5b3b5; border-top: 0; border-radius: 0 0 38px 38px; clip-path: inset(0); display: flex; align-items: center; gap: 25px; letter-spacing: .7px; position: relative; border-image: none; }
.compose::before { content: ""; position: absolute; left: -1px; right: -1px; top: 0; height: 36px; background: #f5f5f5; z-index: -1; }
.compose { border-color: transparent; background: radial-gradient(circle at 38px 36px, #f5f5f5 36.500px, #c5c3c5 37px, #c5c3c5 37.800px, #f5f5f5 38px) 0 0 / 38px 74px no-repeat, radial-gradient(circle at 0 36px, #f5f5f5 36.500px, #c5c3c5 37px, #c5c3c5 37.800px, #f5f5f5 38px) 100% 0 / 38px 74px no-repeat, linear-gradient(#c5c3c5, #c5c3c5) 38px 100% / 142px 1px no-repeat; background-origin: border-box; background-clip: border-box; border-radius: 0; clip-path: polygon(0 34px, 24px 34px, 24px 14px, 200px 14px, 200px 36px, 100% 36px, 100% 100%, 0 100%); background-size: 38px 74px, 38px 74px, 143px 1px; }
.compose::before { display: none; }
.compose svg { width: 36px; height: 36px; }
.folders { height: 271px; margin-top: 23px; overflow: hidden; }
.side a { height: 48px; display: flex; align-items: center; padding-left: 42px; gap: 30px; letter-spacing: .3px; }
.side a svg { width: 24px; height: 26px; color: #706b70; }
.side a i { margin-left: 183px; font-style: normal; }
.cur { font-weight: 500; color: #555255; }
.side h2 { font-size: 21px; padding-left: 39px; height: 68px; line-height: 68px; letter-spacing: .5px; }
.meet { margin-top: -10px; }
.side .hang { margin-top: 14px; letter-spacing: .9px; }
.chat-tabs { margin-top: auto; display: flex; padding-left: 109px; height: 46px; }
.chat-tabs span { width: 55px; padding: 9px 0 0 16px; }
.chat-tabs .on { border-bottom: 1px solid #c5c3c5; }
.chat-tabs svg { width: 24px; height: 27px; }

.mail { width: 1422px; display: flex; flex-direction: column; overflow: hidden; border-bottom: 1px solid #c5c3c5; }
.toolbar { height: 73px; flex: none; display: flex; align-items: center; padding-left: 21px; }
.chk, .st { width: 24px; height: 24px; }
.toolbar .chk { color: #777377; }
.caret { width: 10px; height: 6px; margin-left: 13px; }
.refresh { width: 21px; height: 23px; margin-left: 45px; }
.more { width: 6px; height: 24px; margin-left: 46px; }
.count { margin-left: auto; font-size: 19px; color: #777377; letter-spacing: -.08px; }
.pg { width: 10px; height: 16px; fill: none; stroke: #777377; stroke-width: 1.800; margin-left: 40px; margin-right: 10px; }
.pg.dark { stroke: #3a3a3a; margin-right: 34px; }
.rows { flex: 1; min-height: 0; overflow: hidden; }
.row { height: 54px; display: flex; padding: 0 24px 0 21px; white-space: nowrap; line-height: 54px; letter-spacing: .3px; }
.row.att { height: 114px; }
.row .chk { color: #d0ced0; margin-top: 15px; }
.row .st { color: #c5c3c5; margin: 15px 18px 0 21px; }
.row.hover { padding-left: 8px; }
.row.hover .chk, .row.hover .st { color: #777377; }
.grip { width: 8px; height: 22px; margin: 16px 5px 0 0; stroke: #8b868b; }
.from { width: 300px; }
.from small { font-size: 19px; color: #8b868b; }
.subj { width: 847px; }
.subj p { overflow: hidden; }
.subj .end { padding-left: 500px; }
.rest { padding-left: 58px; }
b { font-weight: 700; color: #1b1c1e; }
s { text-decoration: none; color: #777377; }
time { margin-left: auto; font-size: 19px; color: #777377; letter-spacing: -.1px; }
.hover .subj { width: 766px; }
.hover b { letter-spacing: .24px; }
.acts { display: flex; gap: 36px; margin-left: 17px; color: #5a565a; align-items: center; }
.acts svg { width: 24px; height: 26px; }
.rowcal { width: 24px; height: 26px; color: #706b70; margin: 13px 0 0 20px; }
.chips { display: flex; gap: 13px; padding-left: 3px; }
.chip { height: 43px; border: 1px dotted #aaa7aa; border-radius: 22px; line-height: 38px; display: flex; align-items: center; color: #666266; padding-left: 17px; letter-spacing: .3px; }
.chip em { width: 24px; height: 24px; background: #8b868b; color: #f5f5f5; font: 700 11px/24px Roboto; text-align: center; border-radius: 2px; margin-right: 12px; letter-spacing: 0; }
.chip .xl { background: #5c595c; font-size: 18px; }
.c1 { width: 208px; } .c2 { width: 230px; } .c3 { width: 239px; } .c4 { width: 44px; padding-left: 9px; font-size: 19px; } .c5 { width: 238px; }
.scroll { width: 34px; padding: 74px 0 0 8px; }
.thumb { width: 15px; height: 175px; background: #d3d1d3; }
.panel { width: 74px; display: flex; flex-direction: column; align-items: center; padding: 29px 7px 0 0; gap: 56px; }
.panel svg { width: 28px; height: 28px; }
.dots { display: flex; flex-direction: column; gap: 19px; margin-top: 47px; }
.dots i { width: 11px; height: 11px; border-radius: 50%; background: #706b70; }
.dots .lt { background: #b0adb0; }

.download { height: 48px; flex: none; display: flex; align-items: center; padding-left: 19px; font: 12px/19px "Open Sans", sans-serif; letter-spacing: -.37px; color: #777377; padding-bottom: 4px; }
.download > svg:first-child { width: 18px; height: 18px; margin: 2px 11px 0 0; }
.download > div { width: 157px; }
.ddots { width: 14px; height: 4px; }

.taskbar { height: 39px; flex: none; display: flex; background: #d8d7d8; font-family: "Open Sans", sans-serif; }
.start { width: 49px; display: flex; align-items: center; padding-left: 16px; }
.start svg { width: 17px; height: 17px; }
.tsearch { width: 343px; background: #f5f5f5; border-top: 1px solid #b5b3b5; display: flex; align-items: center; gap: 10px; padding: 0 0 2px 11px; font-size: 14.500px; letter-spacing: -.3px; color: #666266; }
.tsearch svg { width: 18px; height: 18px; }
.apps { display: flex; }
.apps span { width: 49px; display: flex; align-items: center; justify-content: center; color: #8b868b; border-bottom: 3px solid transparent; padding-top: 1px; }
.apps svg { width: 24px; height: 24px; }
.apps .obs-task { color: #1b1c1e; }
.apps .open { position: relative; }
.apps .open::after { content: ""; position: absolute; left: 5px; right: 5px; bottom: -3px; height: 2px; background: #706b70; }
.tray { margin-left: auto; margin-right: 157px; padding-bottom: 2px; display: flex; align-items: center; gap: 6px; font-size: 13.500px; letter-spacing: -.4px; }
.tray svg { width: 18px; height: 18px; fill: none; stroke: #3a3a3a; stroke-width: 1.300; }
.tray svg:first-child { stroke: none; }
.temp { margin-left: 4px; }
.cond { margin: 0 11px 0 2px; }

.toast { position: absolute; left: 36px; top: 878px; width: 764px; height: 78px; background: #1c1d1f; border-radius: 5px; color: #f5f5f5; display: flex; align-items: center; padding-left: 36px; box-shadow: 0 4px 8px rgba(60,58,60,.4); white-space: nowrap; }
.toast .msg { font-weight: 500; width: 468px; letter-spacing: .22px; }
.toast .ok { width: 68px; color: #d3d1d3; letter-spacing: .8px; }
.toast .no { width: 143px; color: #d3d1d3; letter-spacing: .65px; }
.toast svg { width: 21px; height: 21px; color: #d3d1d3; }

.switcher { position: absolute; left: 212px; top: 294px; width: 1494px; height: 451px; background: rgba(28,28,28,.87); border: 1px solid #1b1c1e; border-left-color: #8b868b; padding-top: 26px; }
.line { display: flex; height: 206px; }
.first { padding-left: 52px; gap: 11.500px; }
.second { padding-left: 25px; gap: 11.500px; }
.card { display: flex; flex-direction: column; flex: none; }
.card h3 { height: 30px; display: flex; align-items: center; gap: 5px; font: 600 12px "Open Sans", sans-serif; letter-spacing: -.4px; color: #f5f5f5; white-space: nowrap; text-shadow: 0 1px 2px #1b1c1e; padding-bottom: 1px; }
.card h3 svg { width: 24px; height: 24px; color: #8b868b; }
.card h3 .gmini { height: 19px; }
.card h3 .light { color: #f5f5f5; }
.shot { width: 100%; background: #f5f5f5; outline: 1px solid #1b1c1e; }
.w301 { width: 300px; } .w298 { width: 297px; } .w296 { width: 296px; } .w215 { width: 215px; } .w231 { width: 231px; } .w300 { width: 300px; } .w217 { width: 216px; } .w229 { width: 229px; } .w351 { width: 351px; }
.sel { position: relative; }
.sel::after { content: ""; position: absolute; inset: -4px -7px 7px -7px; border: 3px solid #f5f5f5; }
.s { fill: none; stroke: #b8b6b8; stroke-width: 1.500; stroke-dasharray: 2 1 1 2 3 1; }
.t { fill: none; stroke: #a8a5a8; stroke-width: 2; stroke-dasharray: 3 1 2 1 1 1; }
.bolder { stroke: #666266; }
.f { fill: #8b868b; }
.slide { font: 8px "Liberation Sans", sans-serif; fill: #3a3a3a; }
.zoomword { font: 400 27px Lato, sans-serif; fill: #8b868b; }
.dialog { width: 351px; height: 148px; background: #f5f5f5; outline: 1px solid #1b1c1e; font: 12px "Open Sans", sans-serif; letter-spacing: -.3px; padding: 8px 8px 9px; display: flex; flex-direction: column; }
.dt { color: #b0adb0; font-size: 12px; }
.db { display: flex; gap: 11px; padding: 15px 0 0 3px; white-space: nowrap; }
.db svg { width: 30px; height: 30px; margin-top: 2px; }
.db h4 { font-size: 16px; line-height: 22px; color: #706b70; letter-spacing: -.4px; }
.db p { margin-top: 13px; color: #555255; font-size: 12px; line-height: 18px; letter-spacing: -.27px; }
.btns { display: flex; justify-content: flex-end; gap: 7px; margin-top: auto; padding: 0 4px 1px 0; }
.btns span { width: 67px; height: 21px; line-height: 18px; text-align: center; border: 1px solid #d3d1d3; background: #e6e5e6; font-size: 13px; }
.btns .b1 { border: 2px solid #3a3a3a; line-height: 17px; }
.cursor { position: absolute; left: 1164px; top: 274px; width: 12px; height: 18px; }
.qr { position: absolute; left: 1756px; top: 916px; width: 164px; height: 164px; background: #f5f5f5; padding: 12px; }
.qr svg { width: 141px; height: 141px; }
```
FILE: qr.js
```js
// Draws the corner QR badge: finders, alignment mark, data modules and the logo in the middle.
const N = 37;
const svg = document.getElementById('qr');
let seed = 77;
const rnd = () => (seed = (seed * 16807) % 2147483647) / 2147483647;
const ring = (x, y, cx, cy, r) => {
  const d = Math.max(Math.abs(x - cx), Math.abs(y - cy));
  return d > r ? null : (r === 4 ? d !== 4 && d !== 2 : d !== 1);
};
let d = '';
for (let y = 0; y < N; y++) {
  for (let x = 0; x < N; x++) {
    let on = rnd() < 0.5;
    for (const [cx, cy, r] of [[3, 3, 4], [33, 3, 4], [3, 33, 4], [30, 30, 2]]) {
      const v = ring(x, y, cx, cy, r);
      if (v !== null) on = v;
    }
    if (Math.hypot(x - 18, y - 18) < 5.5) on = false;
    if (on) d += `M${x} ${y}h1v1h-1z`;
  }
}
svg.innerHTML = `<path fill="#1b1c1e" d="${d}"/><path fill="none" stroke="#c5c3c5" stroke-width="1.500" d="M15 16q2-2 5-2M15 18q1 4 4 4 3-1 3-4M19 18h2"/>`;
```
